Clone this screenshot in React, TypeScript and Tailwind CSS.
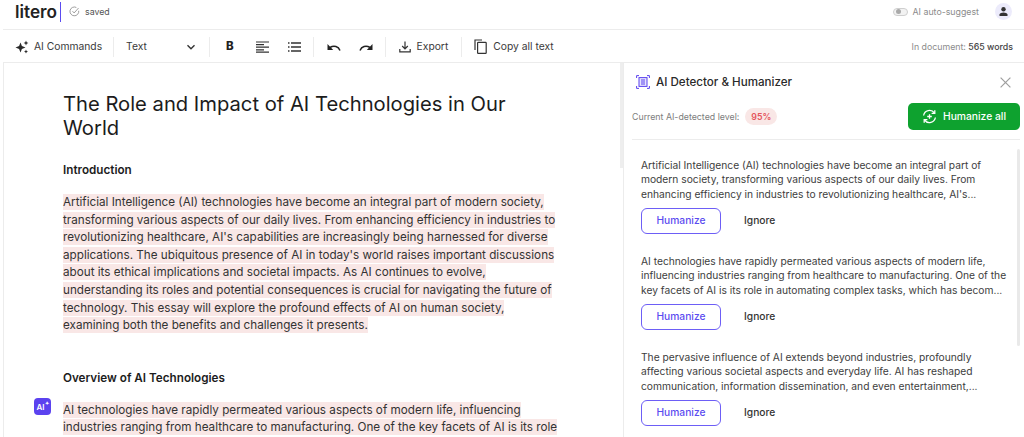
import React from "react";

const Sep = () => <div className="w-px h-[20px] bg-[#ececec]" />;

function Card({ text }: { text: string[] }) {
  return (
    <div className="pl-[9px]">
      <div className="text-[10.24px] leading-[14.7px] text-[#3d3d3d]">
        {text.map((t) => (
          <div key={t} className="whitespace-nowrap">{t}</div>
        ))}
      </div>
      <div className="flex items-center mt-[6px]">
        <div className="w-[80px] h-[26px] rounded-[6px] border border-[#6d5ef6] flex items-center justify-center text-[10.24px] text-[#5b4cf0] font-medium">Humanize</div>
        <div className="ml-[23px] text-[10.24px] font-medium text-[#333]">Ignore</div>
      </div>
    </div>
  );
}

export default function App() {
  const para1 = [
    "Artificial Intelligence (AI) technologies have become an integral part of modern society,",
    "transforming various aspects of our daily lives. From enhancing efficiency in industries to",
    "revolutionizing healthcare, AI's capabilities are increasingly being harnessed for diverse",
    "applications. The ubiquitous presence of AI in today's world raises important discussions",
    "about its ethical implications and societal impacts. As AI continues to evolve,",
    "understanding its roles and potential consequences is crucial for navigating the future of",
    "technology. This essay will explore the profound effects of AI on human society,",
    "examining both the benefits and challenges it presents.",
  ];
  const para2 = [
    "AI technologies have rapidly permeated various aspects of modern life, influencing",
    "industries ranging from healthcare to manufacturing. One of the key facets of AI is its role",
  ];
  return (
    <div className="w-[1024px] h-[437px] overflow-hidden bg-white font-['Inter',sans-serif] text-[#222] flex flex-col">
      {/* top bar */}
      <div className="h-[30px] shrink-0 border-b border-[#ececec] ml-[3px] flex items-center pl-[12px] pr-[12px] pb-[6px]">
        <span className="text-[17.2px] leading-[20px] font-semibold text-[#222]">litero</span>
        <div className="w-px h-[20px] bg-[#5b4cf0] ml-[3px]" />
        <svg className="ml-[8px]" width="11" height="11" viewBox="0 0 12 12" fill="none" stroke="#8a8a8a" strokeWidth="0.9">
          <path d="M10.6 5.2A4.8 4.8 0 1 1 8 1.6" />
          <path d="M3.8 5.6 5.6 7.6 10.4 2.2" />
        </svg>
        <span className="ml-[5px] text-[8.8px] text-[#555]">saved</span>
        <div className="ml-auto flex items-center">
          <div className="w-[15px] h-[8px] rounded-full border border-[#cfcfcf] bg-[#f2f2f2] flex items-center pl-[2px]">
            <div className="w-[5px] h-[5px] rounded-full bg-[#a9a9a9]" />
          </div>
          <span className="ml-[5px] text-[8.8px] text-[#8c8c8c]">AI auto-suggest</span>
          <div className="ml-[16px] w-[17px] h-[17px] rounded-full bg-[#ecebfb] flex items-center justify-center">
            <svg width="11" height="11" viewBox="0 0 11 11" fill="#333">
              <circle cx="5.5" cy="3.2" r="2.2" />
              <path d="M1.5 10V8.6C1.5 7.2 3.8 6.5 5.5 6.5S9.5 7.2 9.5 8.6V10Z" />
            </svg>
          </div>
        </div>
      </div>
      {/* toolbar */}
      <div className="h-[33px] shrink-0 border-b border-[#ececec] ml-[3px] flex items-center pl-[12px] pr-[11px] pt-[1px] text-[10.3px] text-[#3a3a3a]">
        <svg width="14" height="14" viewBox="0 0 14 14" fill="#2a2a2a">
          <path d="M5.5 2.5 6.9 6.1 10.5 7.5 6.9 8.9 5.5 12.5 4.1 8.9 .5 7.5 4.1 6.1Z" />
          <path d="M11 .6 11.7 2.3 13.4 3 11.7 3.7 11 5.4 10.3 3.7 8.6 3 10.3 2.3Z" />
          <path d="M11 9.6 11.6 11 13 11.6 11.6 12.2 11 13.6 10.4 12.2 9 11.6 10.4 11Z" />
        </svg>
        <span className="ml-[5px]">AI Commands</span>
        <div className="ml-[11px]"><Sep /></div>
        <span className="ml-[12px]">Text</span>
        <svg className="ml-[39px]" width="10" height="10" viewBox="0 0 10 10" fill="none" stroke="#333" strokeWidth="1.4">
          <path d="M1.5 3.2 5 6.7 8.5 3.2" />
        </svg>
        <div className="ml-[13px]"><Sep /></div>
        <span className="ml-[16px] text-[11.5px] font-extrabold text-[#222]">B</span>
        <svg className="ml-[22px]" width="13" height="12" viewBox="0 0 13 12" stroke="#333" strokeWidth="1.2">
          <path d="M0 1h13M0 3.6h8M0 6.2h13M0 8.8h8M0 11.2h13" />
        </svg>
        <svg className="ml-[19px]" width="13" height="12" viewBox="0 0 13 12" stroke="#333" strokeWidth="1.3">
          <path d="M3 2h10M3 6h10M3 10h10" />
          <path d="M0 2h1.5M0 6h1.5M0 10h1.5" />
        </svg>
        <div className="ml-[12px]"><Sep /></div>
        <svg className="ml-[13px]" width="14" height="10" viewBox="0 0 14 10" fill="none">
          <path d="M13 8.5C11.5 4.5 7 3 3 5.5" stroke="#222" strokeWidth="1.5" />
          <path d="M.5 2V8H6.2Z" fill="#222" />
        </svg>
        <svg className="ml-[18px]" width="14" height="10" viewBox="0 0 14 10" fill="none">
          <path d="M1 8.5C2.5 4.5 7 3 11 5.5" stroke="#222" strokeWidth="1.5" />
          <path d="M13.5 2V8H7.8Z" fill="#222" />
        </svg>
        <div className="ml-[12px]"><Sep /></div>
        <svg className="ml-[13px]" width="12" height="12" viewBox="0 0 12 12" fill="none" stroke="#333" strokeWidth="1.2">
          <path d="M6 .5V7.5M3.2 5 6 7.8 8.8 5" />
          <path d="M.8 8V10.8H11.2V8" />
        </svg>
        <span className="ml-[6px]">Export</span>
        <div className="ml-[13px]"><Sep /></div>
        <svg className="ml-[12px]" width="13" height="15" viewBox="0 0 13 15" fill="none" stroke="#333" strokeWidth="1.2">
          <path d="M1 11V1H8" />
          <rect x="3.6" y="3.4" width="8.6" height="11" rx="0.6" />
        </svg>
        <span className="ml-[6px]">Copy all text</span>
        <span className="ml-auto text-[8.8px] text-[#8c8c8c]">In document: <span className="text-[#444] font-medium">565 words</span></span>
      </div>
      {/* body */}
      <div className="flex-1 min-h-0 flex">
        {/* editor */}
        <div className="w-[617px] shrink-0 ml-[3px] border-l border-[#ececec] pl-[59px] pt-[29px] relative overflow-hidden">
          <h1 className="text-[20.2px] leading-[24px] font-normal text-[#1c1c1c] w-[500px]">The Role and Impact of AI Technologies in Our World</h1>
          <h2 className="mt-[22px] text-[11.7px] leading-[16px] font-semibold text-[#1c1c1c]">Introduction</h2>
          <div className="mt-[16px] text-[11.7px] leading-[17.6px] text-[#333]">
            {para1.map((l) => (
              <div key={l} className="whitespace-nowrap"><span className="bg-[#f9e7e6] py-[1px]">{l}</span></div>
            ))}
          </div>
          <h2 className="mt-[35px] text-[11.7px] leading-[16px] font-semibold text-[#1c1c1c]">Overview of AI Technologies</h2>
          <div className="mt-[16px] text-[11.7px] leading-[17.6px] text-[#333]">
            {para2.map((l) => (
              <div key={l} className="whitespace-nowrap"><span className="bg-[#f9e7e6] py-[1px]">{l}</span></div>
            ))}
          </div>
          <div className="absolute left-[30px] top-[335px] w-[17px] h-[17px] rounded-[4px] bg-[#5b42ef] flex items-center justify-center text-white text-[8px] font-semibold">
            AI<span className="text-[5px] -mt-[5px]">✦</span>
          </div>
        </div>
        {/* scrollbar */}
        <div className="w-[3px] shrink-0 self-start h-[105px] bg-[#eeeeee]" />
        {/* panel */}
        <div className="flex-1 min-w-0 border-l border-[#ececec] pl-[8px] pr-[4px] flex flex-col">
          <div className="flex items-center pt-[12px] pl-[4px] pr-[9px]">
            <svg width="14" height="14" viewBox="0 0 14 14" fill="none" stroke="#5b42ef" strokeWidth="1">
              <path d="M.6 3V.6H3M11 .6h2.4V3M13.4 11v2.4H11M3 13.4H.6V11" />
              <rect x="3" y="2.6" width="8" height="8.8" fill="#e7e4fd" />
              <path d="M5 5h4M5 7h4M5 9h4" />
            </svg>
            <span className="ml-[6px] text-[11.6px] font-medium leading-[14px] text-[#2a2a2a]">AI Detector &amp; Humanizer</span>
            <svg className="ml-auto" width="11" height="11" viewBox="0 0 11 11" stroke="#9e9e9e" strokeWidth="1.2">
              <path d="M.6.6 10.4 10.4M10.4.6 .6 10.4" />
            </svg>
          </div>
          <div className="flex items-center mt-[14px] pb-[9px] border-b border-[#ececec]">
            <span className="text-[8.8px] text-[#7d7d7d]">Current AI-detected level:</span>
            <span className="ml-[6px] w-[32px] h-[17px] rounded-full bg-[#f9e7e6] text-[#e5555c] text-[8.8px] font-semibold flex items-center justify-center">95%</span>
            <div className="ml-auto w-[112px] h-[27px] rounded-[5px] bg-[#0ea22f] text-white text-[10.3px] font-medium flex items-center justify-center gap-[6px]">
              <svg width="15" height="15" viewBox="0 0 15 15" fill="none" stroke="#fff" strokeWidth="1.3">
                <path d="M1.6 6.5A6 6 0 0 1 12.4 4M13.4 8.5A6 6 0 0 1 2.6 11" />
                <path d="M12.8 1.2V4.4H9.6M2.2 13.8V10.6H5.4" />
                <path d="M7.5 5.2V9.8M5.2 7.5H9.8" />
              </svg>
              Humanize all
            </div>
          </div>
          <div className="flex-1 min-h-0 flex relative">
            <div className="flex-1 min-w-0 pt-[17.5px] flex flex-col gap-[20px] overflow-hidden">
              <Card text={[
                "Artificial Intelligence (AI) technologies have become an integral part of",
                "modern society, transforming various aspects of our daily lives. From",
                "enhancing efficiency in industries to revolutionizing healthcare, AI's...",
              ]} />
              <Card text={[
                "AI technologies have rapidly permeated various aspects of modern life,",
                "influencing industries ranging from healthcare to manufacturing. One of the",
                "key facets of AI is its role in automating complex tasks, which has becom...",
              ]} />
              <Card text={[
                "The pervasive influence of AI extends beyond industries, profoundly",
                "affecting various societal aspects and everyday life. AI has reshaped",
                "communication, information dissemination, and even entertainment,...",
              ]} />
            </div>
            <div className="absolute right-0 top-[9px] w-[3px] h-[197px] bg-[#e9e9e9] rounded-full" />
          </div>
        </div>
      </div>
    </div>
  );
}
